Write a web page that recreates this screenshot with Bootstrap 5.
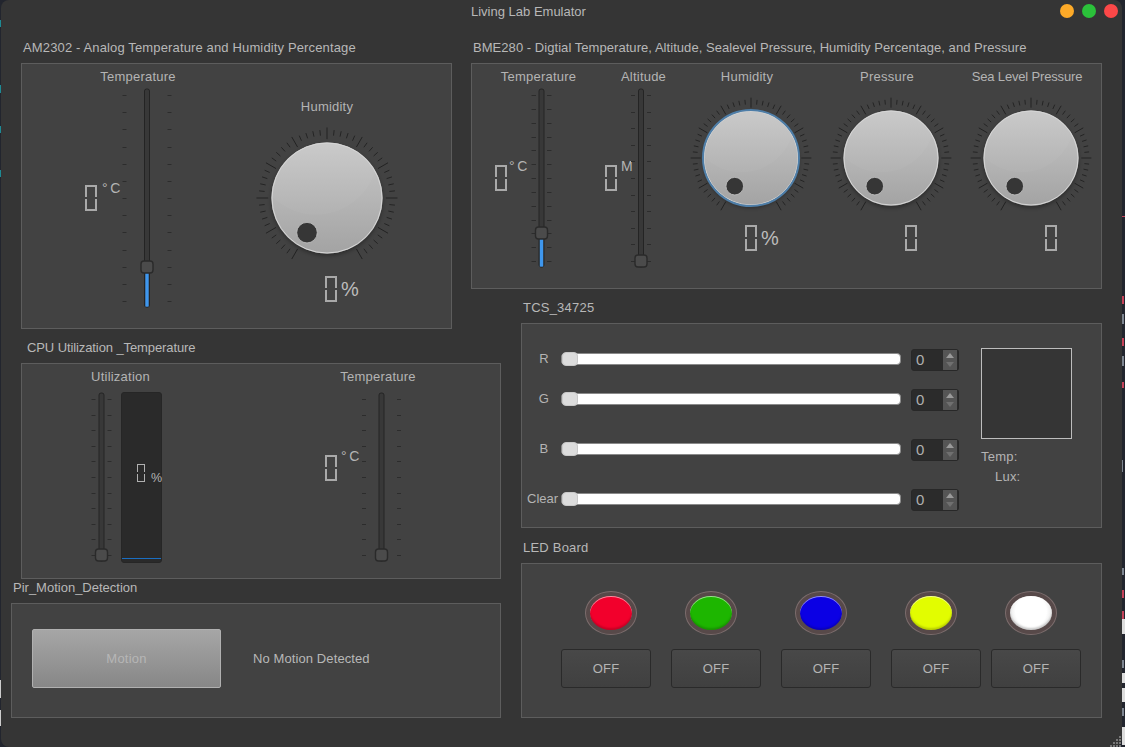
<!DOCTYPE html>
<html lang="en">
<head>
<meta charset="utf-8">
<title>Living Lab Emulator</title>
<link rel="stylesheet" href="https://cdn.jsdelivr.net/npm/bootstrap@5.3.0/dist/css/bootstrap.min.css">
<style>
html,body{height:747px;overflow:hidden}
body{background:#22252e;font-family:"Liberation Sans",Arial,sans-serif;font-size:13px;line-height:15px;color:#b4b4b4;letter-spacing:.22px}
.edge{flex:none;display:block}
.appwin{width:1121px;height:747px;flex:none;background:#353535;border-radius:8px;position:relative}
.titlebar{height:39px;padding-left:470px}
.wintitle{line-height:23px;color:#b8b8b8;letter-spacing:0}
.light{width:14px;height:14px;border-radius:50%;margin:4px 4px 0 4px}
.l-o{background:#fdaa28}.l-g{background:#2bc13a}.l-r{background:#fc4848}
.board{display:grid;padding-left:10px;grid-template-columns:10px 431px 19px 30px 20px 581px;grid-template-rows:260px 40px 200px 40px 139px}
.a-am{grid-area:1/2/3/3}.a-bme{grid-area:1/4/2/7}.a-tcs{grid-area:2/6/4/7}.a-cpu{grid-area:3/2/5/5}.a-pir{grid-area:5/1/6/5}.a-led{grid-area:4/6/6/7}
.gtitle{height:24px;line-height:16px;padding:1px 0 0 2px;white-space:nowrap;color:#b8b8b8}
.t6{padding-left:6px}
.sp-am{letter-spacing:.14px}.sp-bme{letter-spacing:.05px}.sp-cpu{letter-spacing:-.1px}.sp-pir{letter-spacing:0}
.gbody{background:#424242;border:1px solid #5d5d5d}
.h-am{height:266px}.h-bme{height:226px}.h-tcs{height:205px}.h-cpu{height:216px}.h-pir{height:115px}.h-led{height:155px}
.wlabel{text-align:center;white-space:nowrap;height:15px;margin-top:5px}
.sp-sea{letter-spacing:-.17px}
.lcd{display:block;flex:none;width:12px;height:26px}
.lcd::before,.lcd::after{content:"";display:block;width:100%;height:12px;border:2px solid #a9a9a9}
.lcd::before{border-bottom:0}
.lcd::after{margin-top:2px;border-top:0}
.lcd-s{width:8px;height:18px}
.lcd-s::before,.lcd-s::after{height:8px;border-width:1px;border-color:#b0b0b0}
.lcd-s::before{border-bottom:0}
.lcd-s::after{border-top:0}
.unit{white-space:nowrap;font-size:14px;line-height:16px;margin-top:-5px;margin-left:5px;letter-spacing:-.6px}
.unit-b{margin-top:-7px;margin-left:2px}
.unit-m{margin-top:-7px;margin-left:4px;letter-spacing:0}
.unit-c{margin-top:-7px;margin-left:4px}
.pct{font-size:20px;line-height:24px;margin-left:4px;margin-top:1px;letter-spacing:0;color:#bcbcbc}
.knobsvg,.slsvg{display:block;flex:none}
/* AM2302 */
.am-temp{width:116px;margin-left:58px}
.am-row{padding-left:5px;margin-top:4px}
.am-read{width:33px;margin-top:97px}
.am-hum{width:150px;margin-left:56px;margin-top:30px}
.am-hum .knobsvg{margin-top:9px}
.am-out{padding-left:73px;margin-top:3px}
/* BME280 */
.bm-c1{width:87px;margin-left:23px}
.bm-c2{width:77px;margin-left:23px}
.bm-row{margin-top:4px}
.bm-r1{width:33px;margin-top:77px}
.bm-r2{width:23px;margin-top:77px}
.bm-k{width:130px}
.bm-k .wlabel{padding-right:8px}
.bm-k1{margin-left:4px}.bm-k2{margin-left:10px}
.bm-k .knobsvg{margin-top:9px}
.bm-out{margin-top:2px}
.po-59{padding-left:59px}.po-79{padding-left:79px}
/* CPU */
.cu-c1{width:83px;margin-left:57px}
.cu-row{padding-left:9px;margin-top:8px}
.cbar{width:41px;height:171px;margin-left:6px;background:#2a2a2a;border:1px solid #262626;border-radius:3px;padding-top:71px}
.cbar-read{padding-left:15px}
.cbar-pct{font-size:12.5px;line-height:14px;margin-left:6px;margin-top:7px;letter-spacing:0}
.cbar-fill{height:1px;background:#1a6ec2;margin-top:auto;margin-bottom:3px}
.cu-c2{width:106px;margin-left:163px}
.cu-r2{width:35px;margin-top:63px}
/* PIR */
.p-body{padding:25px 0 0 20px}
.btn.motion,.btn.motion:disabled{width:189px;height:59px;border-radius:2px;border:1px solid #b0b0b0;background:linear-gradient(#a6a6a6,#878787);color:#b6b6b6;opacity:1;font-size:13px;padding:0;letter-spacing:.22px}
.p-msg{margin-left:32px;margin-top:22px;color:#b8b8b8;letter-spacing:.1px}
/* TCS */
.c-left{padding-top:25px;padding-left:5px}
.c-row{height:22px}
.c-row+.c-row{margin-top:28px}
.c-row.r2{margin-top:18px}
.c-lab{width:34px;text-align:center;margin-bottom:3px}
.c-lab.cl{padding-right:6px;letter-spacing:0}
.c-range{width:340px;height:14px;margin-bottom:2px;-webkit-appearance:none;appearance:none;background:transparent;padding:0;display:block}
.c-range::-webkit-slider-runnable-track{height:12px;background:#fff;border:1px solid #8a8a8a;border-radius:4px}
.c-range::-webkit-slider-thumb{-webkit-appearance:none;appearance:none;width:16px;height:14px;margin-top:-2px;background:#dcdcdc;border:1px solid #c8c8c8;border-radius:4px}
.spin{width:48px;height:22px;margin-left:10px;background:#2b2b2b;border:1px solid #282828;border-radius:3px;padding-left:4px;font-size:15px;line-height:19px;color:#b0b0b0;letter-spacing:0}
.spin svg{display:block;margin:0 1px 0 auto}
.c-right{margin-left:22px;padding-top:24px}
.swatch{width:91px;height:91px;background:#353535;border:1px solid #bdbdbd}
.c-info{line-height:20px;margin-top:8px}
.c-lux{padding-left:14px}
/* LED */
.l-body{padding:27px 0 0 39px}
.l-col{width:90px}
.l-gap{margin-left:20px}.l-gap2{margin-left:10px}
.ledring{width:52px;height:44px;border-radius:50%;background:#574949;border:1px solid #7b6c6c;margin-left:14px;padding:4px}
.ledring.first{margin-left:24px}
.ledcore{height:34px;border-radius:50%;box-shadow:inset 0 1px 0 rgba(255,255,255,.55),inset 0 -2px 2px rgba(0,0,0,.18)}
.c-red{background:#f2002c}.c-grn{background:#1db600}.c-blu{background:#0b00e4}.c-yel{background:#e2fd00}
.c-wht{background:radial-gradient(circle at 50% 45%,#fff 55%,#cfcfcf 100%)}
.btn.offbtn{width:90px;height:39px;margin-top:14px;background:linear-gradient(#484848,#404040);border:1px solid #2a2a2a;border-radius:3px;color:#b4b4b4;font-size:13px;padding:0;letter-spacing:.22px}
.grip{position:absolute;right:0;bottom:0;display:block}
</style>
</head>
<body class="d-flex m-0">
<svg class="edge" width="1" height="747" aria-hidden="true"><rect y="20" width="1" height="7" fill="#1d8a94"/><rect y="85" width="1" height="8" fill="#1d8a94"/><rect y="126" width="1" height="7" fill="#1d8a94"/><rect y="170" width="1" height="7" fill="#1d8a94"/><rect y="680" width="1" height="18" fill="#ccc"/><rect y="710" width="1" height="16" fill="#ccc"/></svg>
<main class="appwin">
  <header class="titlebar d-flex align-items-start">
    <div class="wintitle">Living Lab Emulator</div>
    <div class="d-flex ms-auto">
      <span class="light l-o"></span><span class="light l-g"></span><span class="light l-r"></span>
    </div>
  </header>
  <svg width="0" height="0" class="d-block" aria-hidden="true"><defs>
    <linearGradient id="kg" x1="0" y1="0" x2="0" y2="1"><stop offset="0" stop-color="#c8c8c8"/><stop offset="1" stop-color="#a3a3a3"/></linearGradient>
    <filter id="ks" x="-20%" y="-20%" width="140%" height="140%"><feDropShadow dx="0" dy="2" stdDeviation="2" flood-color="#000" flood-opacity=".35"/></filter>
  </defs></svg>
  <div class="board">

    <section class="a-am">
      <div class="gtitle sp-am">AM2302 - Analog Temperature and Humidity Percentage</div>
      <div class="gbody h-am d-flex">
        <div class="am-temp">
          <div class="wlabel">Temperature</div>
          <div class="d-flex am-row">
            <div class="am-read d-flex"><span class="lcd" role="img" aria-label="0"></span><span class="unit">° C</span></div>
            <svg class="slsvg" data-slider data-w="58" data-h="220" data-cx="29" data-i="20.5" data-o="24.5" data-n="13" data-v="179" data-t0="7" data-t1="213" data-fill="1"></svg>
          </div>
        </div>
        <div class="am-hum">
          <div class="wlabel">Humidity</div>
          <svg class="knobsvg" data-dial data-s="150" data-r="55.5" data-d="40"></svg>
          <div class="d-flex am-out"><span class="lcd" role="img" aria-label="0"></span><span class="pct">%</span></div>
        </div>
      </div>
    </section>

    <section class="a-bme">
      <div class="gtitle sp-bme">BME280 - Digtial Temperature, Altitude, Sealevel Pressure, Humidity Percentage, and Pressure</div>
      <div class="gbody h-bme d-flex">
        <div class="bm-c1">
          <div class="wlabel">Temperature</div>
          <div class="d-flex bm-row">
            <div class="bm-r1 d-flex"><span class="lcd" role="img" aria-label="0"></span><span class="unit unit-b">° C</span></div>
            <svg class="slsvg" data-slider data-w="26" data-h="180" data-cx="13.5" data-i="5.5" data-o="10" data-n="13" data-v="145" data-t0="7" data-t1="173" data-fill="1"></svg>
          </div>
        </div>
        <div class="bm-c2">
          <div class="wlabel">Altitude</div>
          <div class="d-flex bm-row">
            <div class="bm-r2 d-flex"><span class="lcd" role="img" aria-label="0"></span><span class="unit unit-m">M</span></div>
            <svg class="slsvg" data-slider data-w="26" data-h="180" data-cx="13" data-i="6" data-o="10" data-n="11" data-v="173" data-t0="7" data-t1="173"></svg>
          </div>
        </div>
        <div class="bm-k bm-k1">
          <div class="wlabel">Humidity</div>
          <svg class="knobsvg" data-dial data-s="130" data-r="47.5" data-d="32.5" data-focus="1"></svg>
          <div class="d-flex bm-out po-59"><span class="lcd" role="img" aria-label="0"></span><span class="pct">%</span></div>
        </div>
        <div class="bm-k bm-k2">
          <div class="wlabel">Pressure</div>
          <svg class="knobsvg" data-dial data-s="130" data-r="47.5" data-d="32.5"></svg>
          <div class="d-flex bm-out po-79"><span class="lcd" role="img" aria-label="0"></span></div>
        </div>
        <div class="bm-k bm-k2">
          <div class="wlabel sp-sea">Sea Level Pressure</div>
          <svg class="knobsvg" data-dial data-s="130" data-r="47.5" data-d="32.5"></svg>
          <div class="d-flex bm-out po-79"><span class="lcd" role="img" aria-label="0"></span></div>
        </div>
      </div>
    </section>

    <section class="a-tcs">
      <div class="gtitle">TCS_34725</div>
      <div class="gbody h-tcs d-flex align-items-start">
        <div class="c-left">
          <div class="c-row d-flex align-items-center">
            <div class="c-lab">R</div>
            <input class="c-range" type="range" min="0" max="255" value="0" aria-label="R">
            <div class="spin d-flex">0<svg width="14" height="20" aria-hidden="true"><rect width="14" height="20" fill="#555"/><polygon points="7,3 11,8 3,8" fill="#9a9a9a"/><polygon points="3,12 11,12 7,17" fill="#707070"/></svg></div>
          </div>
          <div class="c-row r2 d-flex align-items-center">
            <div class="c-lab">G</div>
            <input class="c-range" type="range" min="0" max="255" value="0" aria-label="G">
            <div class="spin d-flex">0<svg width="14" height="20" aria-hidden="true"><rect width="14" height="20" fill="#555"/><polygon points="7,3 11,8 3,8" fill="#9a9a9a"/><polygon points="3,12 11,12 7,17" fill="#707070"/></svg></div>
          </div>
          <div class="c-row d-flex align-items-center">
            <div class="c-lab">B</div>
            <input class="c-range" type="range" min="0" max="255" value="0" aria-label="B">
            <div class="spin d-flex">0<svg width="14" height="20" aria-hidden="true"><rect width="14" height="20" fill="#555"/><polygon points="7,3 11,8 3,8" fill="#9a9a9a"/><polygon points="3,12 11,12 7,17" fill="#707070"/></svg></div>
          </div>
          <div class="c-row d-flex align-items-center">
            <div class="c-lab cl">Clear</div>
            <input class="c-range" type="range" min="0" max="255" value="0" aria-label="Clear">
            <div class="spin d-flex">0<svg width="14" height="20" aria-hidden="true"><rect width="14" height="20" fill="#555"/><polygon points="7,3 11,8 3,8" fill="#9a9a9a"/><polygon points="3,12 11,12 7,17" fill="#707070"/></svg></div>
          </div>
        </div>
        <div class="c-right">
          <div class="swatch"></div>
          <div class="c-info">
            <div>Temp:</div>
            <div class="c-lux">Lux:</div>
          </div>
        </div>
      </div>
    </section>

    <section class="a-cpu">
      <div class="gtitle t6 sp-cpu">CPU Utilization _Temperature</div>
      <div class="gbody h-cpu d-flex">
        <div class="cu-c1">
          <div class="wlabel">Utilization</div>
          <div class="d-flex cu-row">
            <svg class="slsvg" data-slider data-w="27" data-h="172" data-cx="13.5" data-i="6" data-o="10" data-n="11" data-v="163" data-t0="7" data-t1="163"></svg>
            <div class="cbar d-flex flex-column">
              <div class="d-flex cbar-read"><span class="lcd lcd-s" role="img" aria-label="0"></span><span class="cbar-pct">%</span></div>
              <div class="cbar-fill"></div>
            </div>
          </div>
        </div>
        <div class="cu-c2">
          <div class="wlabel">Temperature</div>
          <div class="d-flex cu-row p-0">
            <div class="cu-r2 d-flex"><span class="lcd" role="img" aria-label="0"></span><span class="unit unit-c">° C</span></div>
            <svg class="slsvg" data-slider data-w="44" data-h="172" data-cx="21.5" data-i="15.5" data-o="19.5" data-n="11" data-v="163" data-t0="7" data-t1="163"></svg>
          </div>
        </div>
      </div>
    </section>

    <section class="a-pir">
      <div class="gtitle sp-pir">Pir_Motion_Detection</div>
      <div class="gbody h-pir p-body d-flex align-items-start">
        <button type="button" class="btn motion" disabled>Motion</button>
        <div class="p-msg">No Motion Detected</div>
      </div>
    </section>

    <section class="a-led">
      <div class="gtitle">LED Board</div>
      <div class="gbody h-led l-body d-flex align-items-start">
        <div class="l-col"><div class="ledring first"><div class="ledcore c-red"></div></div><button type="button" class="btn offbtn">OFF</button></div>
        <div class="l-col l-gap"><div class="ledring"><div class="ledcore c-grn"></div></div><button type="button" class="btn offbtn">OFF</button></div>
        <div class="l-col l-gap"><div class="ledring"><div class="ledcore c-blu"></div></div><button type="button" class="btn offbtn">OFF</button></div>
        <div class="l-col l-gap"><div class="ledring"><div class="ledcore c-yel"></div></div><button type="button" class="btn offbtn">OFF</button></div>
        <div class="l-col l-gap2"><div class="ledring"><div class="ledcore c-wht"></div></div><button type="button" class="btn offbtn">OFF</button></div>
      </div>
    </section>
  </div>
  <svg class="grip" width="12" height="12" aria-hidden="true"><g fill="#777"><rect x="9" y="1" width="2" height="2"/><rect x="6" y="4" width="2" height="2"/><rect x="9" y="4" width="2" height="2"/><rect x="3" y="7" width="2" height="2"/><rect x="6" y="7" width="2" height="2"/><rect x="9" y="7" width="2" height="2"/><rect x="0" y="10" width="2" height="2"/><rect x="3" y="10" width="2" height="2"/><rect x="6" y="10" width="2" height="2"/><rect x="9" y="10" width="2" height="2"/></g></svg>
</main>
<svg class="edge" width="3" height="747" aria-hidden="true"><g fill="#c5425a"><rect y="216" width="3" height="1"/><rect y="296" width="2" height="8"/><rect y="338" width="2" height="8"/><rect y="382" width="2" height="6"/><rect y="590" width="2" height="8"/><rect y="611" width="2" height="8"/></g><g fill="#7d8590"><rect y="314" width="2" height="10"/><rect y="356" width="2" height="10"/><rect y="460" width="1" height="12"/><rect y="568" width="2" height="7"/><rect y="660" width="2" height="8"/><rect y="708" width="2" height="8"/></g><g fill="#ddd"><rect y="619" width="3" height="15"/><rect y="673" width="3" height="10"/><rect y="688" width="3" height="14"/><rect y="727" width="3" height="18"/></g></svg>
<script src="https://cdn.jsdelivr.net/npm/bootstrap@5.3.0/dist/js/bootstrap.bundle.min.js"></script>
<script>
var NS='http://www.w3.org/2000/svg';
function add(p,n,a){var e=document.createElementNS(NS,n);for(var k in a)e.setAttribute(k,a[k]);p.appendChild(e);return e;}
document.querySelectorAll('[data-dial]').forEach(function(s,idx){
  var S=+s.dataset.s,R=+s.dataset.r,D=+s.dataset.d,c=S/2;
  s.setAttribute('width',S);s.setAttribute('height',S);s.setAttribute('viewBox','0 0 '+S+' '+S);
  for(var i=0;i<=50;i++){
    var a=(-150+i*6)*Math.PI/180,maj=i%5==0,r0=R*(maj?1.06:1.13),r1=R*(maj?1.27:1.23),sx=Math.sin(a),cx=-Math.cos(a);
    add(s,'line',{x1:c+r0*sx,y1:c+r0*cx,x2:c+r1*sx,y2:c+r1*cx,stroke:maj?'#222':'#242424','stroke-width':1});
  }
  add(s,'circle',{cx:c,cy:c,r:R,fill:'url(#kg)',filter:'url(#ks)'});
  var id='clip'+idx,cp=add(s,'clipPath',{id:id});add(cp,'circle',{cx:c,cy:c,r:R});
  add(s,'circle',{cx:c-R*.2,cy:c-R*.825,r:R*1.125,fill:'#fff','fill-opacity':.035,'clip-path':'url(#'+id+')'});
  add(s,'circle',{cx:c,cy:c,r:R-.5,fill:'none',stroke:'#d6d6d6','stroke-width':1});
  if(s.dataset.focus)add(s,'circle',{cx:c,cy:c,r:R+.5,fill:'none',stroke:'#4e7ea8','stroke-width':2});
  var dx=c-D*Math.sin(Math.PI/6),dy=c+D*Math.cos(Math.PI/6);
  add(s,'circle',{cx:dx,cy:dy,r:R*.185,fill:'#363636',stroke:'#c4c4c4','stroke-width':.8});
});
document.querySelectorAll('[data-slider]').forEach(function(s){
  var d=s.dataset,W=+d.w,H=+d.h,c=+d.cx,i0=+d.i,o=+d.o,n=+d.n,v=+d.v,t0=+d.t0,t1=+d.t1;
  s.setAttribute('width',W);s.setAttribute('height',H);s.setAttribute('viewBox','0 0 '+W+' '+H);
  for(var i=0;i<n;i++){
    var y=Math.round(t0+(t1-t0)*i/(n-1))+.5;
    add(s,'line',{x1:c-o,y1:y,x2:c-i0,y2:y,stroke:'#2c2c2c'});
    add(s,'line',{x1:c+i0,y1:y,x2:c+o,y2:y,stroke:'#2c2c2c'});
  }
  add(s,'rect',{x:c-2.5,y:1,width:5,height:H-1-(H-t1-6),rx:2,fill:'#383838',stroke:'#242424'});
  if(d.fill)add(s,'rect',{x:c-2,y:v,width:4,height:t1+6-v,rx:1,fill:'#3f97ee',stroke:'#2a2a2a','stroke-width':.6});
  add(s,'rect',{x:c-6,y:v-6,width:12,height:12,rx:3,fill:'#4b4b4b',stroke:'#2a2a2a','stroke-width':1.4});
});
</script>
</body>
</html>
